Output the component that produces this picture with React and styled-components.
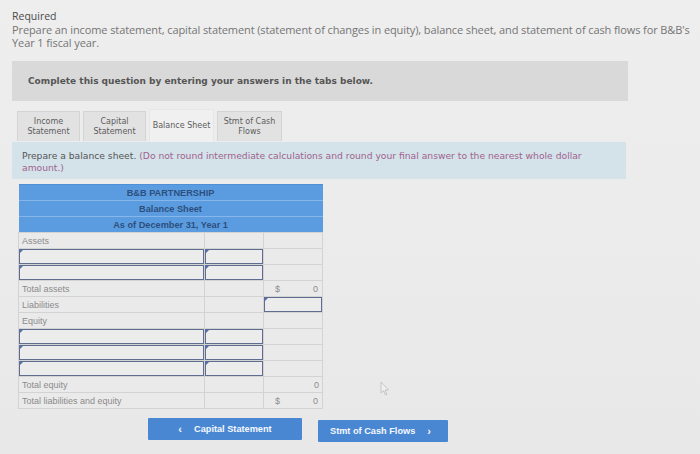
import React from "react";
import styled, { createGlobalStyle } from "styled-components";

const GlobalStyle = createGlobalStyle`
  html, body {
    margin: 0;
    padding: 0;
    background: #ebebeb;
  }
`;

const Page = styled.div`
  position: relative;
  width: 700px;
  height: 454px;
  box-sizing: border-box;
  padding: 10px 6px 0 12px;
  background: linear-gradient(180deg, #eeeeee 0%, #ebebeb 60%, #e8e8e8 100%);
  overflow: hidden;
`;

const Heading = styled.div`
  font-family: "Open Sans", "Liberation Sans", sans-serif;
  font-size: 10.5px;
  line-height: 13px;
  color: #4a4a4a;
`;

const Intro = styled.p`
  margin: 0;
  font-family: "Open Sans", "Liberation Sans", sans-serif;
  font-size: 11px;
  line-height: 13px;
  letter-spacing: -0.1px;
  color: #757575;
`;

const Callout = styled.div`
  margin-top: 12px;
  width: 616px;
  height: 40px;
  box-sizing: border-box;
  padding-left: 16px;
  display: flex;
  align-items: center;
  background: #d9d9d9;
  font-family: "DejaVu Sans", sans-serif;
  font-weight: bold;
  font-size: 9px;
  color: #555;
`;

const TabBar = styled.div`
  margin-top: 8px;
  padding-left: 5px;
  display: flex;
  align-items: flex-end;
  gap: 3px;
`;

const Tab = styled.div`
  width: ${(p) => p.$w}px;
  height: ${(p) => (p.$active ? 33 : 30)}px;
  margin-bottom: ${(p) => (p.$active ? 0 : 1)}px;
  box-sizing: border-box;
  display: flex;
  align-items: center;
  justify-content: center;
  text-align: center;
  background: ${(p) => (p.$active ? "#f0f0f0" : "#e2e2e2")};
  border: 1px solid ${(p) => (p.$active ? "#e6e6e6" : "#d4d4d4")};
  border-bottom: none;
  font-family: "DejaVu Sans", sans-serif;
  font-size: 8px;
  line-height: 10px;
  color: #5c5c5c;
`;

const InfoBox = styled.div`
  width: 614px;
  height: 37px;
  box-sizing: border-box;
  padding: 8px 10px 0 10px;
  background: #d4e2e9;
  font-family: "DejaVu Sans", sans-serif;
  font-size: 9.2px;
  line-height: 12px;
  color: #555;
`;

const Note = styled.span`
  color: #a0628f;
`;

const Sheet = styled.table`
  margin: 5px 0 0 6px;
  width: 304px;
  border-collapse: collapse;
  table-layout: fixed;
  font-family: "Liberation Sans", Arial, sans-serif;
  font-size: 9px;
  color: #8a8a8a;
`;

const HeadCell = styled.td`
  height: 15px;
  padding: 0;
  background: #5b9ce0;
  border-top: 1px solid ${(p) => (p.$first ? "#4f8fd6" : "#86b6ea")};
  text-align: center;
  font-weight: bold;
  font-size: 9.2px;
  color: #2d4f7e;
`;

const Cell = styled.td`
  height: 15px;
  padding: 0 3px;
  border: 1px solid #d3d3d3;
  background: #eaeaea;
  text-align: ${(p) => (p.$right ? "right" : "left")};
  white-space: nowrap;
  overflow: hidden;
`;

const InputCell = styled.td`
  height: 15px;
  padding: 0;
  border: 1px solid #d3d3d3;
`;

const InputBox = styled.div`
  position: relative;
  height: 15px;
  box-sizing: border-box;
  border: 1.5px solid #5f6c8f;
  background: #ececec;
`;

const Marker = styled.span`
  position: absolute;
  left: 0;
  top: 0;
  width: 0;
  height: 0;
  border-top: 3px solid #4c6fb8;
  border-right: 3px solid transparent;
`;

const Money = styled.div`
  display: flex;
  justify-content: space-between;
  padding: 0 1px 0 8px;
`;

const Actions = styled.div`
  margin-top: 9px;
  padding-left: 136px;
  display: flex;
  align-items: flex-start;
  gap: 16px;
`;

const NavButton = styled.div`
  width: ${(p) => p.$w}px;
  height: 22px;
  margin-top: ${(p) => p.$drop || 0}px;
  box-sizing: border-box;
  display: flex;
  align-items: center;
  justify-content: ${(p) => (p.$start ? "flex-start" : "center")};
  padding-left: ${(p) => (p.$start ? 12 : 0)}px;
  gap: 12px;
  background: #4a87d2;
  border-radius: 1px;
  font-family: "Liberation Sans", Arial, sans-serif;
  font-weight: bold;
  font-size: 9.2px;
  color: #f4f8ff;
`;

const Chevron = styled.span`
  font-size: 11px;
  font-weight: bold;
`;

const Pointer = styled.svg`
  position: absolute;
  left: 380px;
  top: 381px;
  opacity: 0.35;
`;

function InputRow() {
  return (
    <tr>
      <InputCell>
        <InputBox>
          <Marker />
        </InputBox>
      </InputCell>
      <InputCell>
        <InputBox>
          <Marker />
        </InputBox>
      </InputCell>
      <Cell />
    </tr>
  );
}

export default function App() {
  return (
    <>
      <GlobalStyle />
      <Page>
        <Heading>Required</Heading>
        <Intro>
          Prepare an income statement, capital statement (statement of changes in equity), balance sheet, and
          statement of cash flows for B&amp;B's Year 1 fiscal year.
        </Intro>
        <Callout>Complete this question by entering your answers in the tabs below.</Callout>
        <TabBar>
          <Tab $w={63}>
            Income
            <br />
            Statement
          </Tab>
          <Tab $w={63}>
            Capital
            <br />
            Statement
          </Tab>
          <Tab $w={65} $active>
            Balance Sheet
          </Tab>
          <Tab $w={65}>
            Stmt of Cash
            <br />
            Flows
          </Tab>
        </TabBar>
        <InfoBox>
          Prepare a balance sheet.{" "}
          <Note>(Do not round intermediate calculations and round your final answer to the nearest whole dollar</Note>
          <br />
          <Note>amount.)</Note>
        </InfoBox>
        <Sheet>
          <colgroup>
            <col style={{ width: 186 }} />
            <col style={{ width: 59 }} />
            <col style={{ width: 59 }} />
          </colgroup>
          <tbody>
            <tr>
              <HeadCell colSpan={3} $first>
                B&amp;B PARTNERSHIP
              </HeadCell>
            </tr>
            <tr>
              <HeadCell colSpan={3}>Balance Sheet</HeadCell>
            </tr>
            <tr>
              <HeadCell colSpan={3}>As of December 31, Year 1</HeadCell>
            </tr>
            <tr>
              <Cell>Assets</Cell>
              <Cell />
              <Cell />
            </tr>
            <InputRow />
            <InputRow />
            <tr>
              <Cell>Total assets</Cell>
              <Cell />
              <Cell>
                <Money>
                  <span>$</span>
                  <span>0</span>
                </Money>
              </Cell>
            </tr>
            <tr>
              <Cell>Liabilities</Cell>
              <Cell />
              <InputCell>
                <InputBox>
                  <Marker />
                </InputBox>
              </InputCell>
            </tr>
            <tr>
              <Cell>Equity</Cell>
              <Cell />
              <Cell />
            </tr>
            <InputRow />
            <InputRow />
            <InputRow />
            <tr>
              <Cell>Total equity</Cell>
              <Cell />
              <Cell $right>0</Cell>
            </tr>
            <tr>
              <Cell>Total liabilities and equity</Cell>
              <Cell />
              <Cell>
                <Money>
                  <span>$</span>
                  <span>0</span>
                </Money>
              </Cell>
            </tr>
          </tbody>
        </Sheet>
        <Actions>
          <NavButton $w={154}>
            <Chevron>&lsaquo;</Chevron>
            <span>Capital Statement</span>
          </NavButton>
          <NavButton $w={130} $drop={2} $start>
            <span>Stmt of Cash Flows</span>
            <Chevron>&rsaquo;</Chevron>
          </NavButton>
        </Actions>
        <Pointer width="10" height="15" viewBox="0 0 10 15">
          <path d="M1 1 L1 12 L3.5 9.5 L5.5 14 L7 13.3 L5 9 L8.5 9 Z" fill="#fff" stroke="#666" strokeWidth="0.8" />
        </Pointer>
      </Page>
    </>
  );
}
